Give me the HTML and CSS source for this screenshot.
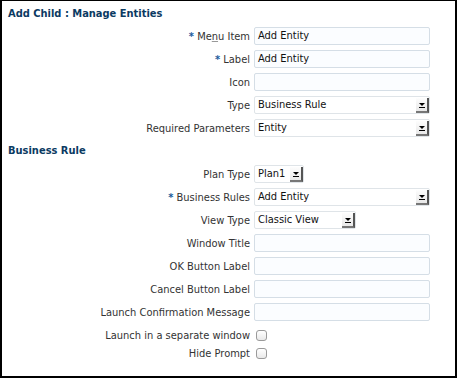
FILE: index.html
```html
<!DOCTYPE html>
<html lang="en">
<head>
    <meta charset="UTF-8">
    <title>Add Child : Manage Entities</title>
    <link rel="stylesheet" href="styles.css">
</head>
<body>
    <div class="panel">
        <h1 class="section">Add Child : Manage Entities</h1>

        <div class="row">
            <label class="lbl"><span class="req">*</span> Me<u>n</u>u Item</label>
            <div class="field">Add Entity</div>
        </div>
        <div class="row">
            <label class="lbl"><span class="req">*</span> Label</label>
            <div class="field">Add Entity</div>
        </div>
        <div class="row">
            <label class="lbl">Icon</label>
            <div class="field"></div>
        </div>
        <div class="row">
            <label class="lbl">Type</label>
            <div class="select">Business Rule<span class="arrow"></span></div>
        </div>
        <div class="row">
            <label class="lbl">Required Parameters</label>
            <div class="select">Entity<span class="arrow"></span></div>
        </div>

        <h2 class="section">Business Rule</h2>

        <div class="row">
            <label class="lbl">Plan Type</label>
            <div class="select small">Plan1<span class="arrow"></span></div>
        </div>
        <div class="row">
            <label class="lbl"><span class="req">*</span> Business Rules</label>
            <div class="select">Add Entity<span class="arrow"></span></div>
        </div>
        <div class="row">
            <label class="lbl">View Type</label>
            <div class="select medium">Classic View<span class="arrow"></span></div>
        </div>
        <div class="row">
            <label class="lbl">Window Title</label>
            <div class="field"></div>
        </div>
        <div class="row">
            <label class="lbl">OK Button Label</label>
            <div class="field"></div>
        </div>
        <div class="row">
            <label class="lbl">Cancel Button Label</label>
            <div class="field"></div>
        </div>
        <div class="row">
            <label class="lbl">Launch Confirmation Message</label>
            <div class="field"></div>
        </div>
        <div class="row check-row">
            <label class="lbl">Launch in a separate window</label>
            <span class="checkbox"></span>
        </div>
        <div class="row check-row">
            <label class="lbl">Hide Prompt</label>
            <span class="checkbox"></span>
        </div>
    </div>
</body>
</html>
```

FILE: styles.css
```css
* {
    margin: 0;
    padding: 0;
    box-sizing: border-box;
}
body {
    background-color: #000;
    font-family: 'DejaVu Sans Condensed', 'DejaVu Sans', sans-serif;
    font-size: 11px;
    color: #333;
}
.panel {
    background-color: #fff;
    margin: 1px 2px 0 2px;
    height: 375px;
    padding: 4px 0 0 6px;
}
.section {
    font-size: 11px;
    font-weight: bold;
    color: #0b3a62;
    line-height: 17px;
    margin-bottom: 5px;
}
h2.section {
    margin: 5px 0 6px 0;
}
.row {
    display: flex;
    align-items: center;
    height: 18px;
    margin-bottom: 5px;
}
.lbl {
    width: 246px;
    text-align: right;
    padding-right: 4px;
    white-space: nowrap;
}
.lbl u {
    text-decoration-color: #999;
}
.req {
    color: #1b5b9c;
    font-weight: bold;
}
.field, .select {
    width: 176px;
    height: 18px;
    border: 1px solid #d5dee6;
    border-radius: 2px;
    background-color: #fbfdff;
    color: #111;
    padding: 0 3px;
    line-height: 16px;
}
.select {
    position: relative;
    background-color: #fff;
    border-color: #dfe4e8;
}
.select.small {
    width: 50px;
}
.select.medium {
    width: 102px;
}
.arrow {
    position: absolute;
    right: 0;
    top: 1px;
    width: 13px;
    height: 15px;
    background: linear-gradient(#fdfdfd, #e8e8e8);
    border-right: 2px solid #555;
    border-bottom: 2px solid #777;
}
.arrow:before {
    content: "";
    position: absolute;
    left: 3px;
    top: 5px;
    border-left: 3px solid transparent;
    border-right: 3px solid transparent;
    border-top: 3px solid #000;
}
.arrow:after {
    content: "";
    position: absolute;
    left: 3px;
    top: 9px;
    width: 6px;
    height: 1px;
    background-color: #000;
}
.check-row {
    margin-bottom: 0;
}
.checkbox {
    width: 11px;
    height: 11px;
    margin-left: 2px;
    border: 1px solid #9a9a9a;
    border-radius: 3px;
    background: linear-gradient(#fff, #e9e9e9);
}
```
